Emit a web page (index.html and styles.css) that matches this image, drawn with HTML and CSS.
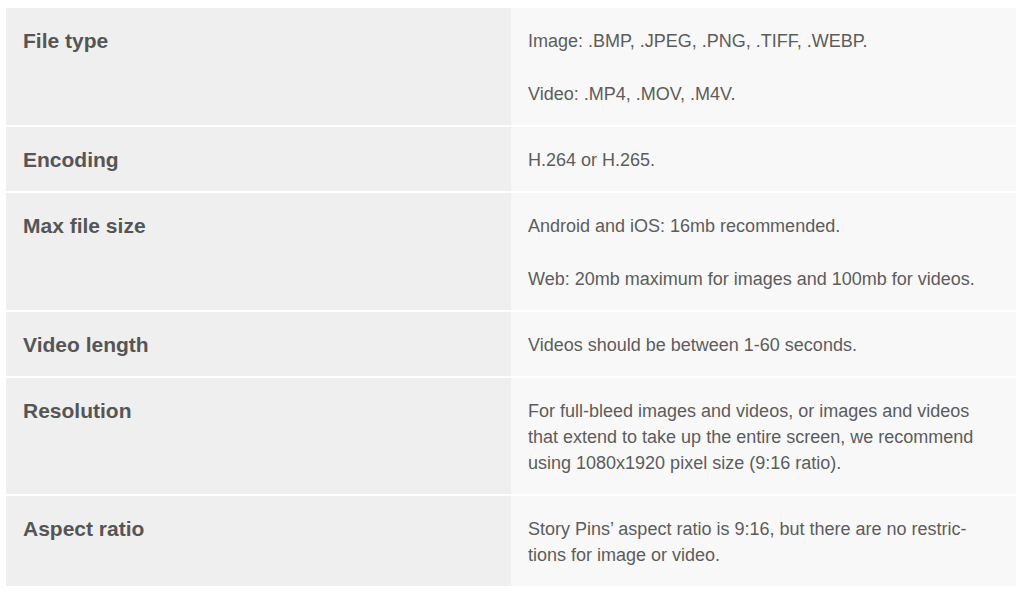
FILE: index.html
```html
<!DOCTYPE html>
<html>
<head>
<meta charset="utf-8">
<link rel="stylesheet" href="styles.css">
</head>
<body>
<div class="specs">
  <div class="label">File type</div>
  <div class="value"><p>Image: .BMP, .JPEG, .PNG, .TIFF, .WEBP.</p><p>Video: .MP4, .MOV, .M4V.</p></div>
  <div class="label">Encoding</div>
  <div class="value"><p>H.264 or H.265.</p></div>
  <div class="label">Max file size</div>
  <div class="value"><p>Android and iOS: 16mb recommended.</p><p>Web: 20mb maximum for images and 100mb for videos.</p></div>
  <div class="label">Video length</div>
  <div class="value"><p>Videos should be between 1-60 seconds.</p></div>
  <div class="label">Resolution</div>
  <div class="value"><p>For full-bleed images and videos, or images and videos that extend to take up the entire screen, we recommend using 1080x1920 pixel size (9:16 ratio).</p></div>
  <div class="label">Aspect ratio</div>
  <div class="value"><p>Story Pins’ aspect ratio is 9:16, but there are no restric-<br>tions for image or video.</p></div>
</div>
</body>
</html>
```
FILE: styles.css
```css
html, body {
  margin: 0;
  padding: 0;
  background: #ffffff;
}
body {
  padding: 8px 8px 0 6px;
  font-family: "Liberation Sans", Arial, sans-serif;
}
.specs {
  display: grid;
  grid-template-columns: 505px 505px;
  row-gap: 2px;
}
.label {
  background: #efefef;
  padding: 20px 17px 18px;
  font-size: 21px;
  font-weight: bold;
  line-height: 26px;
  color: #555555;
}
.value {
  background: #f8f8f8;
  padding: 20px 17px 18px;
  font-size: 18px;
  line-height: 26px;
  color: #5c5c5c;
}
.value p {
  margin: 0;
}
.value p + p {
  margin-top: 27px;
}
```
